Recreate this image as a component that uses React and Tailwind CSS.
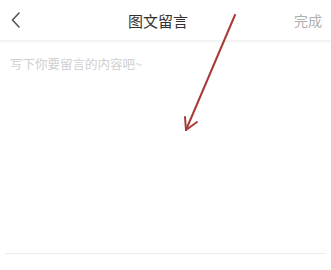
import React from 'react';

export default function App() {
  return (
    <div
      className="relative w-[331px] h-[270px] bg-white overflow-hidden"
      style={{ fontFamily: '"Noto Sans CJK SC", "Noto Sans", sans-serif' }}
    >
      {/* Header */}
      <div className="flex items-center justify-between h-[42px] px-[8px] border-b-2 border-[#f3f3f3]">
        <svg width="12" height="18" viewBox="0 0 12 18" className="ml-[2px]">
          <path d="M9 2 L2.5 9 L9 16" fill="none" stroke="#555" strokeWidth="1.6" strokeLinecap="round" strokeLinejoin="round" />
        </svg>
        <div className="text-[15px] text-[#333] leading-none">图文留言</div>
        <div className="text-[14px] text-[#b0b0b0] leading-none mr-[1px]">完成</div>
      </div>

      {/* Text area */}
      <div className="pt-[16px] h-[212px] border-b border-[#ececec] mx-[5px] pl-[5px]">
        <div className="text-[12.5px] text-[#cfcfcf] leading-none">写下你要留言的内容吧~</div>
      </div>

      {/* Annotation arrow */}
      <svg className="absolute left-0 top-0" width="331" height="270" viewBox="0 0 331 270">
        <g stroke="#a83a36" strokeWidth="2" strokeLinecap="round" fill="none">
          <path d="M235 15 L186 130" />
          <path d="M186 130 L185 117" />
          <path d="M186 130 L197 122" />
        </g>
      </svg>
    </div>
  );
}
